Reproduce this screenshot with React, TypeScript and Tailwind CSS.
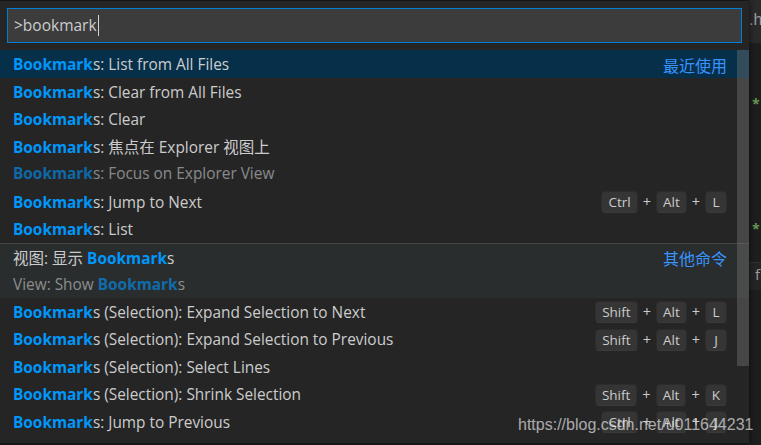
import React from "react";

const FONT = "font-['Open_Sans','Noto_Sans_CJK_SC',sans-serif]";

type Item = {
  pre?: React.ReactNode;
  rest: React.ReactNode;
  detail?: { pre?: string; rest: string };
  right?: string;
  keys?: string[];
  selected?: boolean;
  group?: boolean;
};

const HL = () => <span className="font-bold text-[#0097fb]">Bookmark</span>;

const Cjk = ({ children }: { children: React.ReactNode }) => (
  <span className="font-['Noto_Sans_CJK_SC',sans-serif] text-[15.5px]">{children}</span>
);

const items: Item[] = [
  { rest: "s: List from All Files", right: "最近使用", selected: true },
  { rest: "s: Clear from All Files" },
  { rest: "s: Clear" },
  {
    rest: (
      <>
        s: <Cjk>焦点在</Cjk> Explorer <Cjk>视图上</Cjk>
      </>
    ),
    detail: { rest: "s: Focus on Explorer View" },
  },
  { rest: "s: Jump to Next", keys: ["Ctrl", "Alt", "L"] },
  { rest: "s: List" },
  {
    pre: (
      <>
        <Cjk>视图</Cjk>: <Cjk>显示</Cjk>{" "}
      </>
    ),
    rest: "s",
    detail: { pre: "View: Show ", rest: "s" },
    right: "其他命令",
    group: true,
  },
  { rest: "s (Selection): Expand Selection to Next", keys: ["Shift", "Alt", "L"] },
  { rest: "s (Selection): Expand Selection to Previous", keys: ["Shift", "Alt", "J"] },
  { rest: "s (Selection): Select Lines" },
  { rest: "s (Selection): Shrink Selection", keys: ["Shift", "Alt", "K"] },
  { rest: "s: Jump to Previous", keys: ["Ctrl", "Alt", "J"] },
];

function Keys({ keys }: { keys: string[] }) {
  return (
    <div className="flex items-center">
      {keys.map((k, i) => (
        <React.Fragment key={i}>
          {i > 0 && <span className="mx-[5px] text-[14.5px] text-[#cccccc]">+</span>}
          <span className="h-[22px] min-w-[22px] px-[6px] rounded-[4px] bg-[#353535] border border-[#2c2c2c] border-b-[#3a3a3a] text-[13.5px] leading-[20px] text-[#cccccc] text-center">
            {k}
          </span>
        </React.Fragment>
      ))}
    </div>
  );
}

function Row({ it }: { it: Item }) {
  const bg = it.selected ? "bg-[#062f4a]" : it.group ? "bg-[#2a2d2e] border-t border-[#454545]" : "";
  return (
    <div className={`flex flex-col pl-[13px] pr-[22px] ${bg} ${it.detail ? "h-[55px]" : "h-[27.5px]"}`}>
      <div className="flex items-center h-[27.5px] pt-[2px] shrink-0">
        <div className="flex-1 whitespace-nowrap text-[15.4px] text-[#cccccc]">
          {it.pre}
          <HL />
          {it.rest}
        </div>
        {it.right && (
          <span className="font-['Noto_Sans_CJK_SC',sans-serif] text-[16px] text-[#3794ff]">{it.right}</span>
        )}
        {it.keys && <Keys keys={it.keys} />}
      </div>
      {it.detail && (
        <div className="flex items-center h-[26px] pt-[1px] text-[15.4px] text-[#cccccc] opacity-60">
          <span className="whitespace-pre">
            {it.detail.pre}
            <HL />
            {it.detail.rest}
          </span>
        </div>
      )}
    </div>
  );
}

export default function App() {
  return (
    <div className={`relative w-[761px] h-[445px] overflow-hidden bg-[#1e1e1e] flex ${FONT}`}>
      <div className="relative z-10 w-[749px] h-[442px] mt-[1px] bg-[#252526] shadow-[0_0_6px_1px_rgba(0,0,0,0.5)] flex flex-col">
        <div className="px-[7px] pt-[7px]">
          <div className="h-[35px] border border-[#007fd4] bg-[#3c3c3c] flex items-center pl-[6px]">
            <span className="text-[15.5px] text-[#cccccc]">&gt;bookmark</span>
            <span className="w-px h-[21px] bg-[#d4d4d4] ml-[1px]" />
          </div>
        </div>
        <div className="relative mt-[7px] flex flex-col">
          {items.map((it, i) => (
            <Row key={i} it={it} />
          ))}
          <div className="absolute right-0 top-0 w-[12px] h-[316px] bg-[rgba(121,121,121,0.4)]" />
        </div>
      </div>
      <div className="w-[12px] flex flex-col">
        <div className="h-[43px] bg-[#2b2b2b] pt-[10px] text-[16px] text-[#9d9d9d] leading-[20px] whitespace-nowrap font-['Liberation_Sans',sans-serif]">
          .h
        </div>
        <div className="h-[52px]" />
        <div className="pl-[3px] text-[14px] leading-[18px] text-[#6a9955] font-bold">*</div>
        <div className="h-[107px]" />
        <div className="pl-[3px] text-[14px] leading-[18px] text-[#6a9955] font-bold">*</div>
        <div className="h-[24px]" />
        <div className="h-[28px] bg-[#252526] border-t border-[#303030] pl-[6px] text-[15px] text-[#9d9d9d]">f</div>
      </div>
      <div className="absolute left-[518px] top-[417px] z-20 text-[16px] leading-[16px] text-[rgba(225,225,225,0.72)] font-['Liberation_Sans',sans-serif] whitespace-nowrap">
        https://blog.csdn.net/u011644231
      </div>
    </div>
  );
}
